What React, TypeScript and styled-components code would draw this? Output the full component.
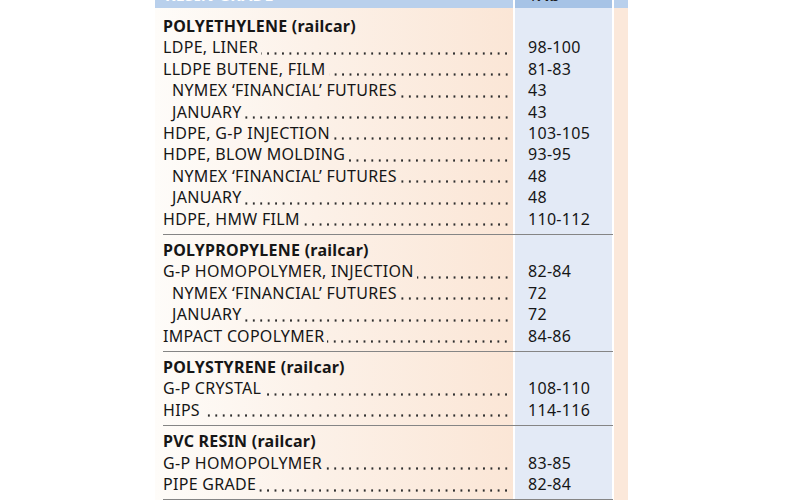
import React from "react";
import styled, { createGlobalStyle } from "styled-components";

const Global = createGlobalStyle`
  html, body { margin: 0; padding: 0; background: #ffffff; }
  body { font-family: "Noto Sans", "Open Sans", sans-serif; color: #161616; }
`;

const Panel = styled.div`
  margin-left: 155px;
  width: 473px;
  height: 500px;
  overflow: hidden;
  background:
    linear-gradient(to right, #fefcf9 0%, #fcf1e8 45%, #fbe6d6 100%) 0 0 / 358px 100% no-repeat,
    linear-gradient(#e3eaf6, #e3eaf6) 360px 0 / 97px 100% no-repeat,
    linear-gradient(#fbe8da, #fbe8da) 459px 0 / 14px 100% no-repeat,
    #ffffff;
`;

const Header = styled.div`
  display: grid;
  grid-template-columns: 358px 97px 14px;
  column-gap: 2px;
  height: 8px;
  overflow: hidden;
`;

const HeadCell = styled.div<{ $tone: "light" | "dark" }>`
  background: ${(p) => (p.$tone === "dark" ? "#a6c3e6" : "#b9d0ec")};
  color: ${(p) => (p.$tone === "dark" ? "#1d1d1d" : "#ffffff")};
  font-weight: 700;
  font-size: 16px;
  line-height: 21.4px;
  letter-spacing: 0.3px;
  padding-left: ${(p) => (p.$tone === "dark" ? "13px" : "10px")};
  overflow: hidden;
  white-space: nowrap;
`;

const HeadText = styled.div`
  margin-top: -14.6px;
`;

const Body = styled.div`
  padding-top: 2.5px;
`;

const Section = styled.section`
  margin: 0 15px 0 8px;
  padding: 5.5px 0 3.6px;
  border-bottom: 1.5px solid #858585;
`;

const Row = styled.div`
  display: grid;
  grid-template-columns: 347px 1fr;
  height: 21.4px;
  font-size: 16px;
  line-height: 21.4px;
  letter-spacing: 0.3px;
  white-space: nowrap;
`;

const Title = styled.div`
  font-weight: 700;
  letter-spacing: 0.25px;
  height: 21.4px;
  font-size: 16px;
  line-height: 21.4px;
  white-space: nowrap;
`;

const Qualifier = styled.span`
  font-weight: 700;
`;

const LabelCell = styled.div<{ $indent: boolean }>`
  display: flex;
  align-items: flex-end;
  padding-left: ${(p) => (p.$indent ? "9px" : "0")};
  overflow: hidden;
`;

const Label = styled.span`
  flex: none;
`;

const Leader = styled.span`
  flex: 1;
  align-self: flex-end;
  height: 3px;
  margin-bottom: 4px;
  margin-left: 3px;
  background-image: radial-gradient(circle, #2e2e2e 0.95px, transparent 1.35px);
  background-size: 7.45px 3px;
  background-repeat: repeat-x;
  background-position: right center;
`;

const Value = styled.div`
  padding-left: 18px;
`;

type Item = { label: string; value: string; indent?: boolean };
type Group = { name: string; items: Item[] };

const groups: Group[] = [
  {
    name: "POLYETHYLENE",
    items: [
      { label: "LDPE, LINER", value: "98-100" },
      { label: "LLDPE BUTENE, FILM", value: "81-83" },
      { label: "NYMEX \u2018FINANCIAL\u2019 FUTURES", value: "43", indent: true },
      { label: "JANUARY", value: "43", indent: true },
      { label: "HDPE, G-P INJECTION", value: "103-105" },
      { label: "HDPE, BLOW MOLDING", value: "93-95" },
      { label: "NYMEX \u2018FINANCIAL\u2019 FUTURES", value: "48", indent: true },
      { label: "JANUARY", value: "48", indent: true },
      { label: "HDPE, HMW FILM", value: "110-112" },
    ],
  },
  {
    name: "POLYPROPYLENE",
    items: [
      { label: "G-P HOMOPOLYMER, INJECTION", value: "82-84" },
      { label: "NYMEX \u2018FINANCIAL\u2019 FUTURES", value: "72", indent: true },
      { label: "JANUARY", value: "72", indent: true },
      { label: "IMPACT COPOLYMER", value: "84-86" },
    ],
  },
  {
    name: "POLYSTYRENE",
    items: [
      { label: "G-P CRYSTAL", value: "108-110" },
      { label: "HIPS", value: "114-116" },
    ],
  },
  {
    name: "PVC RESIN",
    items: [
      { label: "G-P HOMOPOLYMER", value: "83-85" },
      { label: "PIPE GRADE", value: "82-84" },
    ],
  },
];

export default function App() {
  return (
    <>
      <Global />
      <Panel>
        <Header>
          <HeadCell $tone="light">
            <HeadText>RESIN GRADE</HeadText>
          </HeadCell>
          <HeadCell $tone="dark">
            <HeadText>¢/lb</HeadText>
          </HeadCell>
          <HeadCell $tone="light" />
        </Header>
        <Body>
          {groups.map((g) => (
            <Section key={g.name}>
              <Title>
                {g.name} <Qualifier>(railcar)</Qualifier>
              </Title>
              {g.items.map((it, i) => (
                <Row key={i}>
                  <LabelCell $indent={!!it.indent}>
                    <Label>{it.label}</Label>
                    <Leader />
                  </LabelCell>
                  <Value>{it.value}</Value>
                </Row>
              ))}
            </Section>
          ))}
        </Body>
      </Panel>
    </>
  );
}
